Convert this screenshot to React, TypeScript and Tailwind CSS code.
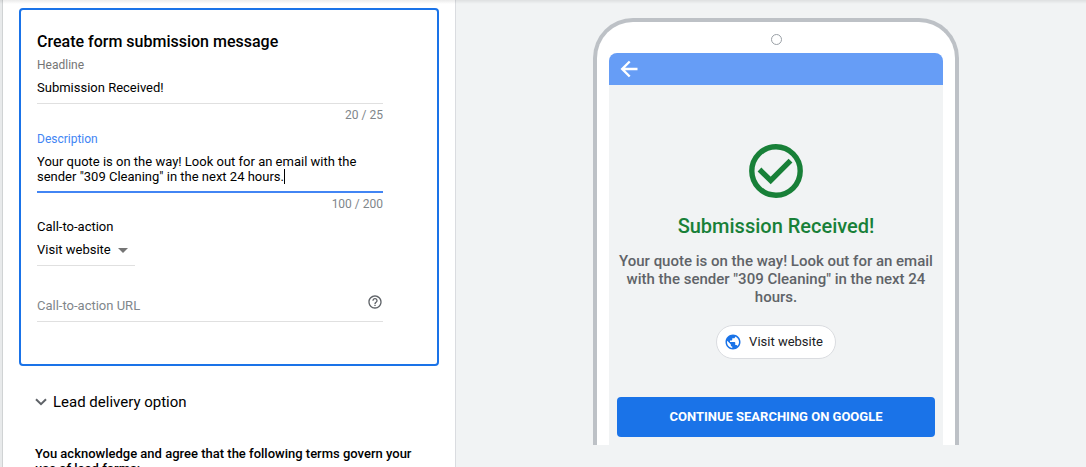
import React, { useState } from 'react';
import { MdHelpOutline, MdPublic } from 'react-icons/md';

function Counter({ value, max }: { value: number; max: number }) {
  return (
    <p className="mt-[3px] text-right text-xs leading-4 text-[#80868b]">
      {value} / {max}
    </p>
  );
}

function MessageForm(props: {
  headline: string;
  setHeadline: (value: string) => void;
  description: string;
  setDescription: (value: string) => void;
}) {
  const { headline, setHeadline, description, setDescription } = props;
  const [cta, setCta] = useState<string>('Visit website');
  const [url, setUrl] = useState<string>('');

  return (
    <form className="rounded border-2 border-[#1a73e8] pt-5 pr-[54px] pb-[42px] pl-4">
      <h2 className="text-base leading-6 font-medium">
        Create form submission message
      </h2>

      <label
        htmlFor="headline"
        className="mt-px block text-xs leading-5 text-[#757575]"
      >
        Headline
      </label>
      <input
        type="text"
        id="headline"
        value={headline}
        onChange={(e) => setHeadline(e.target.value)}
        className="block h-[29px] w-full border-b border-[#e0e0e0] pb-1 text-[13px] outline-none"
      />
      <Counter value={20} max={25} />

      <label
        htmlFor="description"
        className="mt-[6px] block text-xs leading-5 text-[#4285f4]"
      >
        Description
      </label>
      <div className="relative">
        <textarea
          id="description"
          rows={2}
          value={description}
          onChange={(e) => setDescription(e.target.value)}
          className="block w-full resize-none overflow-hidden border-b-2 border-[#4285f4] pt-[5px] pb-[7px] text-[13px] leading-[15px] outline-none"
        />
        {/* text caret */}
        <span className="absolute top-5 left-[247px] h-[15px] w-px bg-black" />
      </div>
      <Counter value={100} max={200} />

      <label htmlFor="cta" className="mt-[5px] block text-[13px] leading-5">
        Call-to-action
      </label>
      <div className="relative w-[98px]">
        <select
          id="cta"
          value={cta}
          onChange={(e) => setCta(e.target.value)}
          className="block h-[29px] w-full appearance-none border-b border-[#e0e0e0] pb-[2px] text-[13px] outline-none"
        >
          <option>Visit website</option>
          <option>Download</option>
          <option>Learn more</option>
        </select>
        <svg
          viewBox="0 0 10 5"
          className="pointer-events-none absolute top-[11px] right-[7px] h-[5px] w-[10px] fill-[#757575]"
        >
          <path d="M0 0h10L5 5z" />
        </svg>
      </div>

      <div className="mt-[26px] flex h-[30px] border-b border-[#e0e0e0]">
        <input
          type="text"
          aria-label="Call-to-action URL"
          placeholder="Call-to-action URL"
          value={url}
          onChange={(e) => setUrl(e.target.value)}
          className="min-w-0 flex-1 pb-[2px] text-[13px] outline-none placeholder:text-[#80868b]"
        />
        <button type="button" aria-label="Help" className="h-5 text-[#5f6368]">
          <MdHelpOutline className="size-4" />
        </button>
      </div>
    </form>
  );
}

function PhonePreview(props: { headline: string; description: string }) {
  const { headline, description } = props;

  return (
    <div className="w-[366px] rounded-t-[40px] border-4 border-b-0 border-[#bdc1c6] bg-white px-3">
      <div className="flex h-[31px] justify-center pt-3">
        <span className="size-[11px] rounded-full border border-[#9aa0a6]" />
      </div>
      <div className="flex h-8 items-center rounded-t-lg bg-[#669df6] px-2 text-white">
        <button type="button" aria-label="Back">
          <svg
            viewBox="0 0 24 24"
            className="size-6 fill-none stroke-current stroke-[2.4]"
          >
            <path d="M20.5 12H5M12.7 4.5L5.2 12l7.5 7.5" />
          </svg>
        </button>
      </div>
      <div className="flex flex-col items-center bg-[#f1f3f4] px-2 pt-[54px] pb-2 text-center">
        <svg
          viewBox="0 0 64 64"
          className="size-16 fill-none stroke-[#188038] stroke-[5.4]"
        >
          <circle cx="32" cy="32" r="24.2" />
          <path d="M15.5 30.5L26.7 41.5L46.5 21.7" />
        </svg>
        <h3 className="mt-[11px] text-xl leading-6 font-medium text-[#188038]">
          {headline}
        </h3>
        <p className="mt-[14px] text-[15px] leading-[18px] font-medium text-[#5f6368]">
          {description}
        </p>
        <a
          href="#"
          className="mt-[19px] flex h-[34px] items-center gap-[7px] rounded-full border border-[#dadce0] bg-white pr-3 pl-[7px] text-[13px] text-[#202124]"
        >
          <MdPublic className="size-[18px] text-[#1a73e8]" />
          Visit website
        </a>
        <button
          type="button"
          className="mt-[38px] h-10 w-full rounded bg-[#1a73e8] text-[13px] font-bold text-white"
        >
          CONTINUE SEARCHING ON GOOGLE
        </button>
      </div>
    </div>
  );
}

function App() {
  const [headline, setHeadline] = useState<string>('Submission Received!');
  const [description, setDescription] = useState<string>(
    'Your quote is on the way! Look out for an email with the sender "309 Cleaning" in the next 24 hours.'
  );

  return (
    <div className="relative flex h-screen overflow-hidden bg-[#f1f3f4] font-['Roboto',sans-serif] text-[#202124]">
      <div className="pointer-events-none absolute inset-x-0 top-0 h-1 bg-linear-to-b from-black/8 to-transparent" />
      <div className="w-[3px] shrink-0 border-r border-[#d0d3d4] bg-[#e8eaeb]" />
      <section className="w-[453px] shrink-0 border-r border-[#dadce0] bg-white px-4 pt-2 text-black">
        <MessageForm
          headline={headline}
          setHeadline={setHeadline}
          description={description}
          setDescription={setDescription}
        />
        <button
          type="button"
          className="mt-6 ml-4 flex h-6 items-center gap-[6px] text-[15px]"
        >
          <svg
            viewBox="0 0 12 8"
            className="h-2 w-3 fill-none stroke-[#5f6368] stroke-2"
          >
            <path d="M1 1.2l5 5 5-5" />
          </svg>
          Lead delivery option
        </button>
        <p className="mt-8 mr-5 ml-4 text-[13px] leading-[15px] font-medium">
          You acknowledge and agree that the following terms govern your use of
          lead forms:
        </p>
      </section>
      <main className="flex min-w-0 flex-1 items-start justify-center pt-[18px] pl-[10px]">
        <PhonePreview headline={headline} description={description} />
      </main>
    </div>
  );
}

export default App;
